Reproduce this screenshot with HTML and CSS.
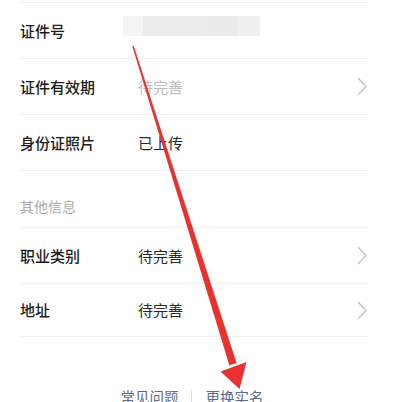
FILE: index.html
```html
<!DOCTYPE html>
<html lang="zh-CN">
<head>
<meta charset="utf-8">
<link rel="stylesheet" href="styles.css">
</head>
<body>
<div class="page">
  <div class="list">
    <div class="row">
      <div class="label">证件号</div>
      <div class="masked"></div>
    </div>
    <div class="row">
      <div class="label">证件有效期</div>
      <div class="value muted">待完善</div>
      <svg class="chev" width="10" height="19" viewBox="0 0 10 19"><polyline points="1,1 9,9.5 1,18" fill="none" stroke="#c4c4c4" stroke-width="1.4"/></svg>
    </div>
    <div class="row">
      <div class="label">身份证照片</div>
      <div class="value">已上传</div>
    </div>
    <div class="section">其他信息</div>
    <div class="row">
      <div class="label">职业类别</div>
      <div class="value">待完善</div>
      <svg class="chev" width="10" height="19" viewBox="0 0 10 19"><polyline points="1,1 9,9.5 1,18" fill="none" stroke="#c4c4c4" stroke-width="1.4"/></svg>
    </div>
    <div class="row last">
      <div class="label">地址</div>
      <div class="value">待完善</div>
      <svg class="chev" width="10" height="19" viewBox="0 0 10 19"><polyline points="1,1 9,9.5 1,18" fill="none" stroke="#c4c4c4" stroke-width="1.4"/></svg>
    </div>
  </div>
  <div class="footer">
    <span class="link">常见问题</span>
    <span class="sep"></span>
    <span class="link">更换实名</span>
  </div>
  <svg class="arrow" width="395" height="402" viewBox="0 0 395 402">
    <polygon points="133.7,43.8 132.3,44.2 229.4,363.4 236.6,361" fill="#e8322f"/>
    <polygon points="220.5,369.5 246.5,360 239.5,387" fill="#e8322f"/>
  </svg>
</div>
</body>
</html>
```
FILE: styles.css
```css
html, body {
  margin: 0;
  padding: 0;
  background: #ffffff;
}
body {
  font-family: "Noto Sans CJK SC", "Noto Sans", sans-serif;
  width: 395px;
  height: 402px;
  overflow: hidden;
}
.page {
  position: relative;
  width: 395px;
  height: 402px;
}
.list {
  margin: 2px 27px 0 20px;
  border-top: 1px solid #f1f1f1;
}
.row {
  display: flex;
  align-items: center;
  height: 55px;
  border-bottom: 1px solid #f1f1f1;
}
.row.last {
  height: 52px;
}
.label {
  width: 118px;
  font-size: 15px;
  font-weight: 500;
  color: #1c1c1c;
  line-height: 20px;
}
.value {
  flex: 1;
  font-size: 15px;
  color: #2a2a2a;
  line-height: 20px;
}
.value.muted {
  color: #bdbdbd;
}
.masked {
  width: 137px;
  height: 20px;
  margin-left: -15px;
  margin-bottom: 10px;
  background: linear-gradient(90deg, #f5f5f5 0, #f5f5f5 20px, #ececec 20px, #ebebeb 115px, #efefef 115px, #f0f0f0 137px);
}
.chev {
  margin-left: auto;
  margin-right: 1px;
  display: block;
}
.section {
  height: 57px;
  display: flex;
  align-items: flex-end;
  box-sizing: border-box;
  padding-bottom: 11px;
  font-size: 14px;
  color: #ababab;
  line-height: 20px;
  border-bottom: 1px solid #f1f1f1;
}
.footer {
  display: flex;
  justify-content: center;
  align-items: center;
  margin-top: 50px;
  padding-right: 11px;
  height: 20px;
}
.link {
  font-size: 14.5px;
  color: #5d6c8a;
  line-height: 20px;
}
.sep {
  width: 1px;
  height: 13px;
  background: #dcdcdc;
  margin: 0 14px 0 12px;
}
.arrow {
  position: absolute;
  left: 0;
  top: 0;
  pointer-events: none;
}
```
